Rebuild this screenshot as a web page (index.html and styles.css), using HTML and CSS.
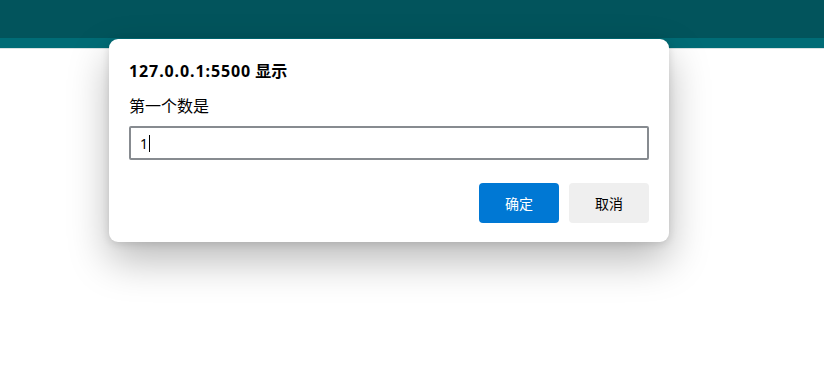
FILE: index.html
```html
<!DOCTYPE html>
<html lang="zh">
<head>
<meta charset="utf-8">
<link rel="stylesheet" href="styles.css">
</head>
<body>
<header class="topbar"></header>
<div class="strip"></div>
<main class="page"></main>
<div class="dialog" role="dialog">
  <h1 class="dialog-title"><span class="title-host">127.0.0.1:5500</span> 显示</h1>
  <p class="dialog-label">第一个数是</p>
  <div class="dialog-input"><span class="input-value">1</span><span class="caret"></span></div>
  <div class="dialog-actions">
    <button class="btn btn-primary">确定</button>
    <button class="btn btn-secondary">取消</button>
  </div>
</div>
</body>
</html>
```
FILE: styles.css
```css
html, body {
  margin: 0;
  padding: 0;
  background: #ffffff;
  font-family: "Noto Sans", "Noto Sans CJK SC", sans-serif;
}
.topbar {
  height: 38px;
  background: #02545c;
}
.strip {
  height: 10px;
  background: #006c76;
  border-bottom: 1px solid #d8e3e4;
}
.page {
  height: 300px;
}
.dialog {
  position: absolute;
  left: 109px;
  top: 39px;
  width: 560px;
  height: 203px;
  box-sizing: border-box;
  padding: 20px 20px 0 20px;
  background: #ffffff;
  border-radius: 9px;
  box-shadow: 0 18px 40px rgba(0, 0, 0, 0.28), 0 2px 8px rgba(0, 0, 0, 0.12);
  display: flex;
  flex-direction: column;
}
.dialog-title {
  margin: 0;
  font-size: 16px;
  font-weight: 700;
  line-height: 24px;
  color: #000;
  font-family: "Noto Sans", "Noto Sans CJK SC", sans-serif;
}
.title-host {
  letter-spacing: 0.9px;
}
.dialog-label {
  margin: 13px 0 0 0;
  font-size: 16px;
  line-height: 20px;
  color: #000;
}
.dialog-input {
  margin-top: 10px;
  height: 34px;
  box-sizing: border-box;
  border: 2px solid #878b90;
  border-radius: 2px;
  display: flex;
  align-items: center;
  padding-left: 9px;
  font-size: 14px;
  color: #000;
}
.caret {
  display: inline-block;
  width: 1px;
  height: 17px;
  background: #000;
  margin-left: 1px;
}
.dialog-actions {
  margin-top: 23px;
  display: flex;
  justify-content: flex-end;
  gap: 10px;
}
.btn {
  width: 80px;
  height: 40px;
  border: none;
  border-radius: 4px;
  font-family: "Noto Sans CJK SC", sans-serif;
  font-size: 14px;
  padding: 0;
}
.btn-primary {
  background: #0078d4;
  color: #fff;
}
.btn-secondary {
  background: #efefef;
  color: #000;
}
```
